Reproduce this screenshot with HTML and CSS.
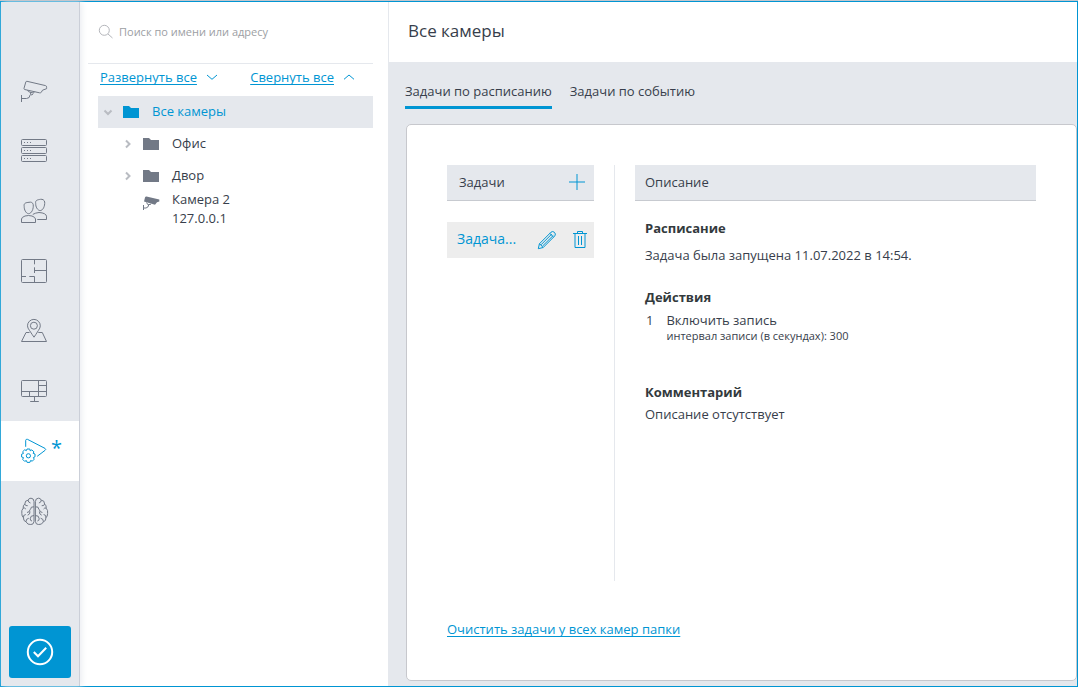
FILE: index.html
```html
<!DOCTYPE html>
<html lang="ru">
<head>
<meta charset="utf-8">
<title>Все камеры</title>
<link rel="stylesheet" href="styles.css">
</head>
<body>
<div class="window">
  <nav class="sidebar" aria-label="Разделы">
    <a class="nav-item" href="#cameras" aria-label="Камеры">
      <svg class="nav-icon" viewBox="0 0 28 28"><path d="M6 4.3 24.5 8.6Q25.8 9 25.6 10.3V11.7L21.5 13.2 20.3 15.3Q19.6 16 18.5 15.8L3.6 12.5Q2.8 12.2 3 11.3L4.8 5Q5.1 4.1 6 4.3ZM6.5 13.3Q7 14.8 9 15.2L12.4 16 13.5 14.8M9.6 15.4V17.5Q11 19 12.2 16.6M9.2 17.8Q8.8 21.5 5.5 21.5H.5M.5 18V25"/></svg>
    </a>
    <a class="nav-item" href="#servers" aria-label="Серверы">
      <svg class="nav-icon" viewBox="0 0 28 28"><rect x=".5" y="2.5" width="25" height="6" rx="1"/><rect x=".5" y="10.5" width="25" height="6" rx="1"/><rect x=".5" y="18.5" width="25" height="6" rx="1"/><path d="M3 5.5h1M6 5.5h1M9 5.5h1M3 13.5h1M6 13.5h1M9 13.5h1M3 21.5h1M6 21.5h1M9 21.5h1"/></svg>
    </a>
    <a class="nav-item" href="#users" aria-label="Пользователи">
      <svg class="nav-icon" viewBox="0 0 28 28"><path d="M3.2 9.5C2.5 6 5 5.6 8 5.3 10 4.8 11.8 5.5 12.2 7.5 12.8 12 10.5 16.5 7.6 16.7 4.8 16.5 3.1 12.5 3.2 9.5ZM14.7 6.5C14 3.2 16.5 2.8 19.5 2.3 21.6 2 23.3 3 23.7 5 24 9.2 22 13.4 19.2 13.6 16.4 13.4 14.6 9.8 14.7 6.5ZM.5 25.5V22Q.7 20.2 4 19 7.5 18 11 19 14.3 20.2 14.5 22V25.5ZM11.8 17.4Q14.5 15.8 18 15.5 25 16 25.5 19.2V22.5H16.3"/></svg>
    </a>
    <a class="nav-item" href="#plans" aria-label="Планы">
      <svg class="nav-icon" viewBox="0 0 28 28"><rect x=".5" y="2.5" width="25" height="23" rx="1"/><path d="M13.5 2.5V7.3M13.5 10.3V16M13.5 13.5h12M.5 19.5H5M8.3 19.5h5.2v6"/></svg>
    </a>
    <a class="nav-item" href="#map" aria-label="Карта">
      <svg class="nav-icon" viewBox="0 0 28 28"><path d="M8.5 15.5H5L.5 24.5h25L21.3 15.5H17.3M13 20.2Q11.8 18.5 8.6 13.6 6.5 11 6.5 8.8A6.4 6.4 0 0 1 19.3 8.8Q19.3 11 17.3 13.6 14.2 18.5 13 20.2Z"/><circle cx="12.9" cy="8.7" r="3.5"/></svg>
    </a>
    <a class="nav-item" href="#screens" aria-label="Экраны">
      <svg class="nav-icon" viewBox="0 0 28 28"><rect x=".5" y="3.5" width="25" height="16" rx="1"/><path d="M17.5 3.5v16M17.5 8.5h8M.5 14.5h25M8.5 14.5v5M13.5 19.5v5M9.2 24.5h8.6"/></svg>
    </a>
    <a class="nav-item nav-item-active" href="#tasks" aria-label="Задачи" aria-current="page">
      <svg class="nav-icon" viewBox="0 0 28 28"><path d="M4.7 9.8V3.3Q5 1.9 6.4 2.3L24 11.4Q25.5 12.3 24 13.4L16.2 19.3"/><path d="M6 12H8.8L9.2 13.8 10.8 12.9 12.9 14.8 12.2 16.4 14 17V19.8L12.4 20.5 13.2 22.2 11.3 24.2 9.6 23.5 8.9 25.4H6.1L5.4 23.6 3.6 24.3 1.7 22.4 2.5 20.6.6 20V17.2L2.4 16.5 1.7 14.7 3.7 12.8 5.4 13.6Z"/><circle cx="7.4" cy="18.8" r="2.1"/></svg>
      <span class="nav-mark">*</span>
    </a>
    <a class="nav-item" href="#analytics" aria-label="Аналитика">
      <svg class="nav-icon" viewBox="0 0 28 28"><path d="M13 4.5Q12.8 1.2 10 1.2 7.8 1 7.2 3.2 3.8 3.2 3.8 7 1.8 8.5 2.2 11.2.2 13.2.8 16.5.8 19.4 2.5 20.8 2.2 24 5 24.8 6.5 28 9.8 27.5 12.6 27.8 13 24.5ZM7.2 3.2Q7 5.4 9.5 6M3.8 7Q4.2 9.2 6.7 8.7M13 9.8Q9.5 9.2 9.5 12.5M2.2 11.2Q3.8 10.4 4.8 12M6 15.5Q9 15.2 9 12.5M9 14.5Q9.2 17.5 6.7 18.2M2.5 20.8Q1.8 17.8 4.8 17.5M5 24.8Q4.7 21.8 7.8 21.2M13 18.5Q9.3 18.3 9.2 21.8 9.3 24 11 24"/><path d="M14.4 4.5Q14.6 1.2 17.4 1.2 19.6 1 20.2 3.2 23.6 3.2 23.6 7 25.6 8.5 25.2 11.2 27.2 13.2 26.6 16.5 26.6 19.4 24.9 20.8 25.2 24 22.4 24.8 20.9 28 17.6 27.5 14.8 27.8 14.4 24.5ZM20.2 3.2Q20.4 5.4 17.9 6M23.6 7Q23.2 9.2 20.7 8.7M14.4 9.8Q17.9 9.2 17.9 12.5M25.2 11.2Q23.6 10.4 22.6 12M21.4 15.5Q18.4 15.2 18.4 12.5M18.4 14.5Q18.2 17.5 20.7 18.2M24.9 20.8Q25.6 17.8 22.6 17.5M22.4 24.8Q22.7 21.8 19.6 21.2M14.4 18.5Q18.1 18.3 18.2 21.8 18.1 24 16.4 24"/></svg>
    </a>
    <button class="apply" type="button" aria-label="Применить">
      <svg class="apply-icon" viewBox="0 0 28 28"><circle cx="14" cy="14" r="12.2"/><path d="M7.8 14 12 18.3 20.2 9.8"/></svg>
    </button>
  </nav>

  <aside class="explorer">
    <label class="search">
      <svg class="search-icon" viewBox="0 0 16 16"><circle cx="6.3" cy="6.3" r="5"/><path d="M10 10 14.5 14"/></svg>
      <input class="search-input" type="search" placeholder="Поиск по имени или адресу" aria-label="Поиск по имени или адресу">
    </label>
    <div class="tree-actions">
      <a class="tree-action" href="#expand"><span class="link">Развернуть все</span><svg class="chevron" viewBox="0 0 12 8"><path d="M1 2 6 6.3 11 2"/></svg></a>
      <a class="tree-action" href="#collapse"><span class="link">Свернуть все</span><svg class="chevron" viewBox="0 0 12 8"><path d="M1 6.3 6 2 11 6.3"/></svg></a>
    </div>
    <ul class="tree">
      <li>
        <div class="row row-selected">
          <svg class="arrow" viewBox="0 0 10 10"><path d="M1.5 3.5 5 7 8.5 3.5"/></svg>
          <svg class="folder" viewBox="0 0 18 14"><path d="M1 1H7L9 3H17V13H1Z"/></svg>
          <span class="row-label">Все камеры</span>
        </div>
        <ul class="branch">
          <li class="row">
            <svg class="arrow" viewBox="0 0 10 10"><path d="M3 1.5 6.5 5 3 8.5"/></svg>
            <svg class="folder" viewBox="0 0 18 14"><path d="M1 1H7L9 3H17V13H1Z"/></svg>
            <span class="row-label">Офис</span>
          </li>
          <li class="row">
            <svg class="arrow" viewBox="0 0 10 10"><path d="M3 1.5 6.5 5 3 8.5"/></svg>
            <svg class="folder" viewBox="0 0 18 14"><path d="M1 1H7L9 3H17V13H1Z"/></svg>
            <span class="row-label">Двор</span>
          </li>
          <li class="row row-camera">
            <svg class="folder camera" viewBox="0 0 18 14"><path d="M4.5.5Q3.5.3 3 1.5L2 5.5 13 8.8 15 6.2 17.3 5.6V3.6Z"/><path class="camera-mount" d="M1.5 9V14M1.5 12H4Q6.3 11.6 6.7 9M4.5 6.5 6 8.8 9 8.2"/></svg>
            <span>Камера 2<br>127.0.0.1</span>
          </li>
        </ul>
      </li>
    </ul>
  </aside>

  <main class="main">
    <header class="header"><h1 class="title">Все камеры</h1></header>
    <div class="tabs" role="tablist">
      <button class="tab tab-active" type="button" role="tab" aria-selected="true">Задачи по расписанию</button>
      <button class="tab" type="button" role="tab" aria-selected="false">Задачи по событию</button>
    </div>
    <section class="card">
      <div class="columns">
        <div class="tasks">
          <div class="bar"><span>Задачи</span>
            <button class="icon-button" type="button" aria-label="Добавить задачу"><svg class="plus" viewBox="0 0 16 16"><path d="M0 8H16M8 0V16"/></svg></button>
          </div>
          <div class="task">
            <span class="task-name">Задача...</span>
            <button class="icon-button" type="button" aria-label="Изменить"><svg class="tool" viewBox="0 0 20 20"><path d="M1.3 18.7 2.4 13.8 14 2.2Q15.7.8 17.4 2.3 19.2 4 17.8 5.9L6.2 17.5ZM2.4 13.8Q3 14.6 4 14.8 4.4 16.4 6.2 17.5M4 14.8 14.8 4M5.4 16.2 16.3 5.4M12.8 3.4 16.6 7.1"/></svg></button>
            <button class="icon-button" type="button" aria-label="Удалить"><svg class="tool" viewBox="0 0 20 20"><path d="M3 3.5H17M7.5 3.5V1.5H12.5V3.5M5 3.5V17.5H15V3.5M8.5 6V15M11.5 6V15"/></svg></button>
          </div>
        </div>
        <div class="details">
          <div class="bar bar-details"><span>Описание</span></div>
          <div class="details-text">
            <h2 class="heading">Расписание</h2>
            <p class="schedule">Задача была запущена 11.07.2022 в 14:54.</p>
            <h2 class="heading">Действия</h2>
            <div class="action">
              <span>1</span>
              <div>Включить запись<div class="note">интервал записи (в секундах): 300</div></div>
            </div>
            <h2 class="heading">Комментарий</h2>
            <p class="comment">Описание отсутствует</p>
          </div>
        </div>
      </div>
      <a class="link clear" href="#clear">Очистить задачи у всех камер папки</a>
    </section>
  </main>
</div>
</body>
</html>
```

FILE: styles.css
```css
* { box-sizing: border-box; }

body {
  display: flex;
  flex-direction: column;
  min-height: 100vh;
  margin: 0;
  border-top: 1px solid #c3c6cc;
  font: 13px/18px "Open Sans", "Noto Sans", sans-serif;
  color: #373e4b;
}

h1, h2, p, ul { margin: 0; padding: 0; }
ul { list-style: none; }
button { padding: 0; border: 0; background: none; font: inherit; color: inherit; }
svg { display: block; flex: none; fill: none; stroke: currentColor; }
a { color: #0095d3; text-decoration: none; }
.link { text-decoration: underline; text-underline-offset: 2px; text-decoration-skip-ink: none; }

.window {
  display: flex;
  flex: 1;
  border: 1px solid #0095d3;
  background: #fff;
}

/* Section navigation */
.sidebar {
  display: flex;
  flex: none;
  flex-direction: column;
  width: 79px;
  padding-top: 59px;
  border-right: 1px solid #cbcfd8;
  background: #e5e8ed;
  box-shadow: 2px 0 6px #eceef2;
}
.nav-item {
  display: flex;
  align-items: center;
  gap: 2px;
  height: 60px;
  padding-left: 20px;
  color: #727986;
}
.nav-item-active { background: #fff; color: #0095d3; }
.nav-icon { width: 28px; height: 28px; stroke-width: 1; }
.nav-mark { padding-bottom: 6px; font-size: 20px; line-height: 28px; }
.apply {
  display: grid;
  place-items: center;
  height: 52px;
  margin: auto 8px 8px;
  border-radius: 3px;
  background: #0095d3;
  color: #fff;
}
.apply-icon { width: 28px; height: 28px; stroke-width: 2; }

/* Camera tree */
.explorer {
  flex: none;
  width: 309px;
  padding: 0 15px 0 8px;
  border-right: 1px solid #e5e8ed;
}
.search {
  display: flex;
  align-items: center;
  gap: 5px;
  height: 62px;
  padding: 0 0 2px 10px;
  border-bottom: 1px solid #e5e8ed;
}
.search-icon { width: 16px; height: 16px; color: #b4b6bb; stroke-width: 1; }
.search-input {
  flex: 1;
  min-width: 0;
  padding: 0;
  border: 0;
  outline: 0;
  background: none;
  font: 11px/18px "Open Sans", "Noto Sans", sans-serif;
}
.search-input::placeholder { color: #9c9ea3; }
.tree-actions {
  display: flex;
  justify-content: space-between;
  height: 32px;
  padding: 4px 18px 0 12px;
}
.tree-action { display: flex; gap: 9px; height: 18px; align-items: center; }
.chevron { width: 12px; height: 8px; }
.tree { padding-left: 10px; }
.branch { padding-left: 20px; }
.row { display: flex; align-items: center; height: 32px; padding-left: 5px; }
.row-selected { background: #e5e8ed; color: #0095d3; }
.row-label { padding-bottom: 2px; }
.arrow { width: 10px; height: 10px; margin-right: 9px; color: #b9bcc2; stroke-width: 2; }
.folder { width: 18px; height: 14px; margin-right: 12px; fill: #727986; stroke: none; }
.row-selected .folder { fill: #0095d3; }
.row-camera { height: 34px; padding-left: 24px; line-height: 19px; }
.camera { align-self: flex-start; margin-top: 4px; }
.camera-mount { fill: none; stroke: #727986; }

/* Content */
.main { display: flex; flex: 1; flex-direction: column; min-width: 0; background: #e5e8ed; }
.header { height: 60px; padding: 16px 19px; background: #fff; }
.title { font-size: 17px; line-height: 26px; font-weight: 400; }
.tabs { display: flex; gap: 18px; padding: 20px 16px 0; }
.tab { height: 27px; padding-bottom: 6px; border-bottom: 3px solid transparent; }
.tab-active { border-color: #0095d3; }
.card {
  display: flex;
  flex: 1;
  flex-direction: column;
  margin: 15px 0 5px 17px;
  padding: 40px 40px 42px;
  border: 1px solid #c7c8cd;
  border-radius: 5px;
  background: #fff;
}
.columns { display: flex; flex: 1; }
.tasks { flex: none; width: 168px; padding-right: 20px; border-right: 1px solid #e5e8ed; }
.details { flex: 1; padding-left: 20px; }
.bar {
  display: flex;
  align-items: center;
  justify-content: space-between;
  height: 36px;
  padding: 0 9px 2px 12px;
  border-bottom: 1px solid #c7cad0;
  background: #e5e8ed;
}
.bar-details { padding-left: 10px; }
.icon-button { color: #0095d3; }
.plus { width: 16px; height: 16px; }
.task {
  display: flex;
  align-items: center;
  gap: 13px;
  height: 36px;
  margin-top: 21px;
  padding: 0 4px 0 10px;
  background: #ededed;
}
.task-name { flex: 1; padding-bottom: 2px; font-size: 14px; color: #0095d3; }
.tool { width: 20px; height: 20px; }
.details-text { padding: 17px 10px 0; }
.heading { font-size: 13px; line-height: 20px; font-weight: 700; color: #333a3d; }
.schedule { margin: 8px 0 23px; }
.action { display: flex; gap: 13px; margin: 5px 0 38px; padding-left: 1px; line-height: 16px; }
.note { font-size: 11px; }
.comment { margin-top: 3px; }
.clear { align-self: flex-start; margin-top: 39px; }
```
